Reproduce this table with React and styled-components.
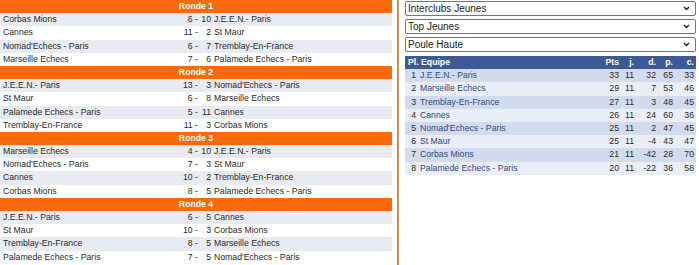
import React from "react";
import styled, { createGlobalStyle } from "styled-components";

const GlobalStyle = createGlobalStyle`
  html, body {
    margin: 0;
    padding: 0;
    background: #fff;
  }
  body {
    font-family: "Liberation Sans", Arial, sans-serif;
    color: #2a2a2a;
  }
`;

const rounds = [
  {
    name: "Ronde 1",
    games: [
      ["Corbas Mions", "6 -", "10", "J.E.E.N.- Paris"],
      ["Cannes", "11 -", "2", "St Maur"],
      ["Nomad'Echecs - Paris", "6 -", "7", "Tremblay-En-France"],
      ["Marseille Echecs", "7 -", "6", "Palamede Echecs - Paris"],
    ],
  },
  {
    name: "Ronde 2",
    games: [
      ["J.E.E.N.- Paris", "13 -", "3", "Nomad'Echecs - Paris"],
      ["St Maur", "6 -", "8", "Marseille Echecs"],
      ["Palamede Echecs - Paris", "5 -", "11", "Cannes"],
      ["Tremblay-En-France", "11 -", "3", "Corbas Mions"],
    ],
  },
  {
    name: "Ronde 3",
    games: [
      ["Marseille Echecs", "4 -", "10", "J.E.E.N.- Paris"],
      ["Nomad'Echecs - Paris", "7 -", "3", "St Maur"],
      ["Cannes", "10 -", "2", "Tremblay-En-France"],
      ["Corbas Mions", "8 -", "5", "Palamede Echecs - Paris"],
    ],
  },
  {
    name: "Ronde 4",
    games: [
      ["J.E.E.N.- Paris", "6 -", "5", "Cannes"],
      ["St Maur", "10 -", "3", "Corbas Mions"],
      ["Tremblay-En-France", "8 -", "5", "Marseille Echecs"],
      ["Palamede Echecs - Paris", "7 -", "5", "Nomad'Echecs - Paris"],
    ],
  },
];

const standings = [
  [1, "J.E.E.N.- Paris", 33, 11, 32, 65, 33],
  [2, "Marseille Echecs", 29, 11, 7, 53, 46],
  [3, "Tremblay-En-France", 27, 11, 3, 48, 45],
  [4, "Cannes", 26, 11, 24, 60, 36],
  [5, "Nomad'Echecs - Paris", 25, 11, 2, 47, 45],
  [6, "St Maur", 25, 11, -4, 43, 47],
  [7, "Corbas Mions", 21, 11, -42, 28, 70],
  [8, "Palamede Echecs - Paris", 20, 11, -22, 36, 58],
];

const Page = styled.div`
  display: flex;
  height: 100vh;
  overflow: hidden;
`;

const Results = styled.div`
  width: 392px;
  flex-shrink: 0;
  font-size: 8.7px;
`;

const Divider = styled.div`
  width: 2px;
  margin-left: 5px;
  background: #d4895c;
`;

const Side = styled.div`
  width: 291px;
  padding: 1px 0 0 6px;
  display: flex;
  flex-direction: column;
  gap: 3px;
`;

const RoundHeader = styled.div`
  height: 13.2px;
  line-height: 13.2px;
  background: #fb6a0a;
  color: #fff;
  font-weight: bold;
  text-align: center;
`;

const GameRow = styled.div`
  display: grid;
  grid-template-columns: 182px 16px 13px 1fr;
  height: 13.2px;
  line-height: 13.2px;
  background: ${({ $shaded }) => ($shaded ? "#e8ebf2" : "#fff")};
  white-space: nowrap;
`;

const Team = styled.span`
  padding-left: 3px;
`;

const Score = styled.span`
  text-align: right;
`;

const Select = styled.select`
  appearance: none;
  width: 100%;
  height: 15px;
  box-sizing: border-box;
  margin: 0;
  padding: 0 14px 0 2px;
  border: 1px solid #767676;
  border-radius: 2px;
  font-family: "Liberation Sans", Arial, sans-serif;
  font-size: 10px;
  line-height: 13px;
  color: #222;
  background: #fff
    url("data:image/svg+xml;utf8,<svg xmlns='http://www.w3.org/2000/svg' width='7' height='5' viewBox='0 0 7 5'><path d='M1 1l2.5 2.5L6 1' fill='none' stroke='%23222' stroke-width='1.4'/></svg>")
    no-repeat right 5px center;
`;

const Standings = styled.div`
  margin-top: 1px;
  font-size: 8.7px;
`;

const StandRow = styled.div`
  display: grid;
  grid-template-columns: 13px 179px 24px 15px 22px 17px 21px;
  height: 13.2px;
  line-height: 13.2px;
  white-space: nowrap;
  background: ${({ $variant }) =>
    $variant === "head" ? "#3d5a96" : $variant === "odd" ? "#d2dcee" : "#eaeef7"};
  color: ${({ $variant }) => ($variant === "head" ? "#fff" : "#2a2a2a")};
  font-weight: ${({ $variant }) => ($variant === "head" ? "bold" : "normal")};
`;

const HeadLabel = styled.span`
  grid-column: span 2;
  padding-left: 3px;
`;

const Rank = styled.span`
  text-align: right;
  padding-right: 2px;
`;

const Name = styled.span`
  padding-left: 2px;
  color: #2c4a82;
`;

const Num = styled.span`
  text-align: right;
  padding-right: 2px;
`;

export default function App() {
  return (
    <Page>
      <GlobalStyle />
      <Results>
        {rounds.map((round) => (
          <div key={round.name}>
            <RoundHeader>{round.name}</RoundHeader>
            {round.games.map((g, i) => (
              <GameRow key={i} $shaded={i % 2 === 0}>
                <Team>{g[0]}</Team>
                <Score>{g[1]}</Score>
                <Score>{g[2]}</Score>
                <Team>{g[3]}</Team>
              </GameRow>
            ))}
          </div>
        ))}
      </Results>
      <Divider />
      <Side>
        <Select defaultValue="ij">
          <option value="ij">Interclubs Jeunes</option>
        </Select>
        <Select defaultValue="tj">
          <option value="tj">Top Jeunes</option>
        </Select>
        <Select defaultValue="ph">
          <option value="ph">Poule Haute</option>
        </Select>
        <Standings>
          <StandRow $variant="head">
            <HeadLabel>Pl. Equipe</HeadLabel>
            <Num>Pts</Num>
            <Num>j.</Num>
            <Num>d.</Num>
            <Num>p.</Num>
            <Num>c.</Num>
          </StandRow>
          {standings.map((s, i) => (
            <StandRow key={s[0]} $variant={i % 2 === 0 ? "odd" : "even"}>
              <Rank>{s[0]}</Rank>
              <Name>{s[1]}</Name>
              {s.slice(2).map((v, k) => (
                <Num key={k}>{v}</Num>
              ))}
            </StandRow>
          ))}
        </Standings>
      </Side>
    </Page>
  );
}
